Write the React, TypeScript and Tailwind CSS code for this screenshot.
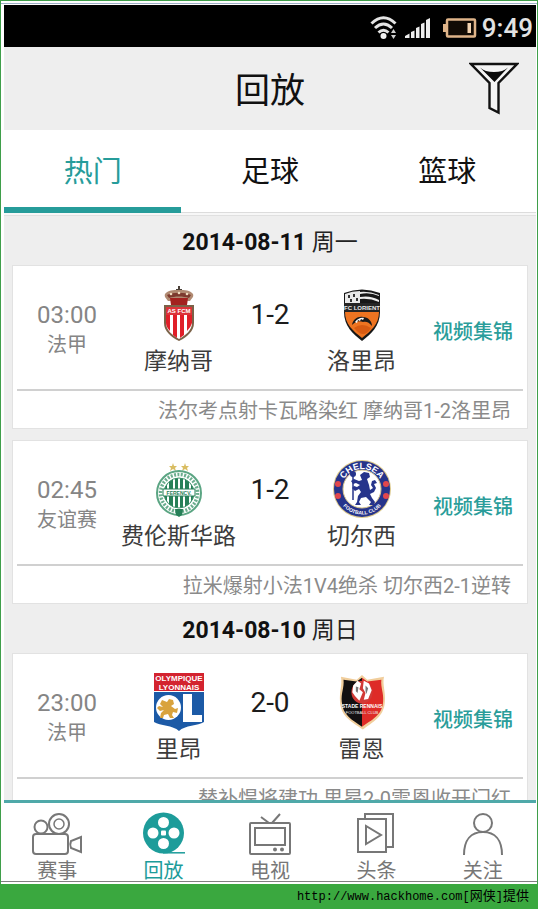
import type { ReactNode } from "react";

/* ---------- club crests ---------- */

function MonacoCrest() {
  return (
    <svg viewBox="0 0 60 60" className="size-[60px]" role="img" aria-label="摩纳哥">
      <path d="M29 2h2v3h2v1h-2v5h-2V6h-2V5h2z" fill="#4a4038" />
      <path d="M16 10c3-4 8-4 14-4s11 0 14 4c1 3-1 4-3 7H19c-2-3-4-4-3-7z" fill="#b08a72" />
      <path d="M18 11c6-3 18-3 24 0l-2 3c-6-2-14-2-20 0z" fill="#7d3a2e" />
      <path d="M21 14h18l-1 7H22z" fill="#a3221f" />
      <circle cx="22" cy="10" r="1.3" fill="#f0dcc0" />
      <circle cx="30" cy="9" r="1.3" fill="#f0dcc0" />
      <circle cx="38" cy="10" r="1.3" fill="#f0dcc0" />
      <path d="M15 21h30v18c0 8-7 14-15 18-8-4-15-10-15-18z" fill="#7b6248" />
      <path d="M17 23h26v16c0 7-6 12-13 16-7-4-13-9-13-16z" fill="#fff" />
      <path d="M17 31h4v16q-4-4-4-8zM24 31h4v23l-4-3zM31 31h4v20l-4 3zM38 31h5v8q-1 4-5 8z" fill="#e01f28" />
      <path d="M17 23h26v8H17z" fill="#dc343a" />
      <text x="30" y="29" textAnchor="middle" fontSize="6" fontWeight="700" fill="#fff" fontFamily="Liberation Sans, sans-serif">AS FCM</text>
    </svg>
  );
}

function LorientCrest() {
  return (
    <svg viewBox="0 0 60 60" className="size-[60px]" role="img" aria-label="洛里昂">
      <path d="M12 9q18-7 36 0v19c0 14-9 22-18 29C21 50 12 42 12 28z" fill="#171717" />
      <path d="M13 10q7-3 15-3v12H13z" fill="#e9e9e9" />
      <path d="M28 8q9-1 19 3v1q-9-4-19-2zM28 13q10-2 19 3v2q-9-4-19-3z" fill="#eee" />
      <path d="M16 11h2v3h-2zM21 10h2v3h-2zM18 15h2v3h-2zM24 14h2v3h-2z" fill="#333" />
      <path d="M12 19h36v9H12z" fill="#252525" />
      <text x="30" y="26" textAnchor="middle" fontSize="6" fontWeight="700" fill="#e8e8e8" fontFamily="Liberation Sans, sans-serif">FC LORIENT</text>
      <path d="M13 28h34c0 12-8 19-17 26-9-7-17-14-17-26z" fill="#ee7421" />
      <path d="M20 41c1-6 6-9 11-8 5 0 9 4 9 9-3-4-6-5-9-4-4-2-8 0-11 3z" fill="#1a1a1a" />
      <path d="M23 38c2-3 6-5 9-4l-1 2-2-1-1 2-2-1-1 3z" fill="#fff" />
      <path d="M22 44q8-6 17 0-4 6-8 6t-9-6z" fill="#d85b12" />
    </svg>
  );
}

function FerencvarosCrest() {
  return (
    <svg viewBox="0 0 60 60" className="size-[60px]" role="img" aria-label="费伦斯华路">
      <defs>
        <clipPath id="fer-disc"><circle cx="30" cy="34" r="15" /></clipPath>
      </defs>
      <path d="M24 4l1 3h3l-2 2 1 3-3-2-3 2 1-3-2-2h3zM36 4l1 3h3l-2 2 1 3-3-2-3 2 1-3-2-2h3z" fill="#d9bd62" />
      <circle cx="30" cy="34" r="22" fill="#fff" stroke="#5ba583" strokeWidth="2" />
      <circle cx="30" cy="34" r="18.500" fill="none" stroke="#6cae8f" strokeWidth="3.500" strokeDasharray="2 1.400" />
      <g clipPath="url(#fer-disc)">
        <path d="M14 18h4v32h-4zM20 18h4v32h-4zM26 18h3v32h-3zM31 18h3v32h-3zM36 18h4v32h-4zM42 18h4v32h-4z" fill="#278058" />
      </g>
      <circle cx="30" cy="34" r="15" fill="none" stroke="#3a9069" />
      <path d="M14 30h32v7H14z" fill="#fff" stroke="#278058" />
      <text x="30" y="35.500" textAnchor="middle" fontSize="5" fontWeight="700" fill="#278058" fontFamily="Liberation Sans, sans-serif">FERENCV.</text>
      <path d="M26 50h8l-1 6-3 2-3-2z" fill="#278058" />
    </svg>
  );
}

function ChelseaCrest() {
  return (
    <svg viewBox="0 0 60 60" className="size-[60px]" role="img" aria-label="切尔西">
      <defs>
        <path id="che-top" d="M9 31a21 21 0 0 1 42 0" />
        <path id="che-bottom" d="M4.500 30a25.500 25.500 0 0 0 51 0" />
      </defs>
      <circle cx="30" cy="30" r="29" fill="#dcc98c" />
      <circle cx="30" cy="30" r="28" fill="#26348b" />
      <circle cx="30" cy="30" r="19" fill="#fff" stroke="#dcc98c" />
      <text fontSize="9" fontWeight="700" fill="#fff" fontFamily="Liberation Sans, sans-serif">
        <textPath href="#che-top" startOffset="50%" textAnchor="middle">CHELSEA</textPath>
      </text>
      <text fontSize="5" fontWeight="700" fill="#fff" fontFamily="Liberation Sans, sans-serif">
        <textPath href="#che-bottom" startOffset="50%" textAnchor="middle">FOOTBALL CLUB</textPath>
      </text>
      <g fill="#e2474c">
        <circle cx="6" cy="25" r="3" /><circle cx="6" cy="37" r="3" />
        <circle cx="54" cy="25" r="3" /><circle cx="54" cy="37" r="3" />
      </g>
      <path d="M28 16l4-3 5 1 1 4-3 2 2 6 1 5 3-2-2-3 1-4 3-1 2 3-3 1 2 4-2 4-4 2 2 4 3 4-1 3h-5l2-3-5-5-5 1-2 4 2 3h-6l2-3 1-6 3-4-2-3-4 2-3-3 2-2 3 1 3-2-4-2-3 1-2-3 3-2 5 2 3-1z" fill="#26348b" />
      <path d="M21 16v25" stroke="#26348b" strokeWidth="1.500" />
      <circle cx="21" cy="15" r="3" fill="#26348b" />
    </svg>
  );
}

function LyonCrest() {
  return (
    <svg viewBox="0 0 60 60" className="size-[60px]" role="img" aria-label="里昂">
      <path d="M5 1h50v18H5z" fill="#d3232f" />
      <text x="30" y="9" textAnchor="middle" fontSize="8" fontWeight="700" fill="#fff" fontFamily="Liberation Sans, sans-serif">OLYMPIQUE</text>
      <text x="30" y="17.500" textAnchor="middle" fontSize="8" fontWeight="700" fill="#fff" fontFamily="Liberation Sans, sans-serif">LYONNAIS</text>
      <path d="M5 20h50v30c-6 4-19 3-25 9-6-6-19-5-25-9z" fill="#1c5aa6" />
      <circle cx="19.500" cy="35.500" r="12.500" fill="#fff" />
      <path d="M34 22h9v21h10v7H34z" fill="#fff" />
      <path d="M13 28l5 2 2-3 4 1 1 4-3 2 4 3 3-1-1 5-4-1-1 3 2 3h-4l-2-4-4 1-1 3h-3l1-5 3-3-4 1-3-3 2-2 4 1-3-3z" fill="#d9a33d" />
    </svg>
  );
}

function RennesCrest() {
  return (
    <svg viewBox="0 0 60 60" className="size-[60px]" role="img" aria-label="雷恩">
      <g transform="translate(3.600 0) scale(.88 .96)">
        <path d="M30 3l6 5 19-3c-2 8 2 15 1 26-1 16-14 21-25 29C19 52 6 47 5 31 4 20 8 13 6 5l18 3z" fill="#f1ce9c" />
        <path d="M30 6l-6 4L9 8c1 8-3 14-2 23 1 14 12 19 23 26z" fill="#121011" />
        <path d="M30 6l6 4 16-2c-1 8 3 14 2 23-1 14-13 19-24 26z" fill="#de2b27" />
        <circle cx="30" cy="21" r="12" fill="#d23a36" />
        <path d="M20 14l5-5 4 3-2 6 4 3-4 9-5-5-3-4zM32 9l6 3 3 7-4 9-5 1 2-7-3-5z" fill="#fff" />
        <path d="M23 15l3 1-1 6-2-2zM34 14l3 3-2 6-1-3z" fill="#777" />
      </g>
      <text x="30" y="36" textAnchor="middle" fontSize="5" fontWeight="700" fill="#fff" fontFamily="Liberation Sans, sans-serif">STADE RENNAIS</text>
      <text x="30" y="42" textAnchor="middle" fontSize="4" fill="#eee" fontFamily="Liberation Sans, sans-serif">FOOTBALL CLUB</text>
    </svg>
  );
}

/* ---------- status bar and header icons ---------- */

function WifiIcon() {
  return (
    <svg viewBox="0 0 28 26" className="h-[26px] w-[28px]" aria-hidden="true">
      <g fill="none" stroke="#e4e4e4" strokeWidth="3">
        <path d="M1.500 8.500q12-11.500 24 0" />
        <path d="M5 13q8.500-8 17 0" />
        <path d="M8.500 17.500q5-4.500 10 0" />
      </g>
      <circle cx="13.500" cy="21" r="3" fill="#f2f2f2" />
      <path d="M23.500 14l2.500 4h-5zM23.500 24l2.500-4h-5z" fill="#d0d0d0" />
    </svg>
  );
}

function SignalIcon() {
  return (
    <svg viewBox="0 0 26 22" className="h-[22px] w-[26px]" aria-hidden="true">
      <path d="M0 19l4.500-2.500V21H0zM6 15l3.500-1.500V21H6zM11 11l3.500-1.500V21H11zM16 7l3.500-1.500V21H16zM21 3l4-2v20h-4z" fill="#ececec" />
    </svg>
  );
}

function BatteryIcon() {
  return (
    <svg viewBox="0 0 34 20" className="h-[20px] w-[34px]" aria-hidden="true">
      <rect x="4" y="1.500" width="28" height="17" rx="1" fill="#120b05" stroke="#dfb489" strokeWidth="2.500" />
      <path d="M0 6h3v8H0z" fill="#dfb489" />
      <path d="M24.500 5h3.500v10h-3.500z" fill="#f3d3b0" />
    </svg>
  );
}

function FilterIcon() {
  return (
    <svg viewBox="0 0 50 53" className="h-[53px] w-[50px]" aria-hidden="true">
      <path d="M2 2h46L29.500 21v29.500l-9-4.500V21z" fill="#f4f4f4" stroke="#111" strokeWidth="2.400" />
      <path d="M11 5.500q5 4.500 14 4.500t14-4.500L25.500 20z" fill="#0a0a0a" />
    </svg>
  );
}

/* ---------- bottom navigation icons ---------- */

function CameraIcon() {
  return (
    <svg viewBox="0 0 50 44" className="h-[44px] w-[50px]" fill="none" stroke="currentColor" strokeWidth="2" aria-hidden="true">
      <circle cx="9" cy="15" r="6.500" />
      <circle cx="27" cy="12" r="10" />
      <circle cx="27" cy="12" r="5" strokeWidth="1.500" />
      <rect x="1" y="22" width="35" height="20" rx="3" fill="#fff" />
      <path d="M49 25v15l-10-4q-1.500-3.500 0-7z" />
    </svg>
  );
}

function ReelIcon() {
  return (
    <svg viewBox="0 0 42 44" className="h-[44px] w-[42px]" aria-hidden="true">
      <circle cx="20.500" cy="21" r="20.500" fill="currentColor" />
      <path d="M20 40.800h22" stroke="currentColor" strokeWidth="1.500" />
      <g fill="#fff">
        <circle cx="20.500" cy="10.500" r="5.500" />
        <circle cx="20.500" cy="31.500" r="5.500" />
        <circle cx="10" cy="21" r="5.500" />
        <circle cx="31" cy="21" r="5.500" />
        <rect x="18" y="18.500" width="5" height="5" rx="1" />
      </g>
    </svg>
  );
}

function TvIcon() {
  return (
    <svg viewBox="0 0 42 44" className="h-[44px] w-[42px]" fill="none" stroke="currentColor" strokeWidth="2" aria-hidden="true">
      <path d="M12 5l8 6M31 2l-8 9" />
      <rect x="1" y="11" width="40" height="31" rx="1" />
      <rect x="6" y="16" width="30" height="17" />
      <g fill="currentColor" stroke="none">
        <circle cx="26" cy="37.500" r="2" />
        <circle cx="33" cy="37.500" r="2" />
      </g>
    </svg>
  );
}

function HeadlinesIcon() {
  return (
    <svg viewBox="0 0 38 44" className="h-[44px] w-[38px]" fill="none" stroke="currentColor" strokeWidth="2" aria-hidden="true">
      <path d="M8 7V2h28v33h-6" />
      <rect x="1" y="7" width="28" height="33" />
      <path d="M9 14v18l15-9z" />
    </svg>
  );
}

function PersonIcon() {
  return (
    <svg viewBox="0 0 40 44" className="h-[44px] w-[40px]" fill="none" stroke="currentColor" strokeWidth="2" aria-hidden="true">
      <circle cx="20" cy="11" r="9" />
      <path d="M1 43C1 28 8 20 20 20s19 8 19 23" />
    </svg>
  );
}

/* ---------- data ---------- */

type Match = {
  time: string;
  league: string;
  home: string;
  homeCrest: ReactNode;
  score: string;
  away: string;
  awayCrest: ReactNode;
  summary: string;
};

type Day = { date: string; weekday: string; matches: Match[] };

const days: Day[] = [
  {
    date: "2014-08-11",
    weekday: "周一",
    matches: [
      { time: "03:00", league: "法甲", home: "摩纳哥", homeCrest: <MonacoCrest />, score: "1-2", away: "洛里昂", awayCrest: <LorientCrest />, summary: "法尔考点射卡瓦略染红 摩纳哥1-2洛里昂" },
      { time: "02:45", league: "友谊赛", home: "费伦斯华路", homeCrest: <FerencvarosCrest />, score: "1-2", away: "切尔西", awayCrest: <ChelseaCrest />, summary: "拉米爆射小法1V4绝杀 切尔西2-1逆转" },
    ],
  },
  {
    date: "2014-08-10",
    weekday: "周日",
    matches: [
      { time: "23:00", league: "法甲", home: "里昂", homeCrest: <LyonCrest />, score: "2-0", away: "雷恩", awayCrest: <RennesCrest />, summary: "替补悍将建功 里昂2-0雷恩收开门红" },
    ],
  },
];

const tabs = ["热门", "足球", "篮球"];

const navItems = [
  { label: "赛事", icon: <CameraIcon /> },
  { label: "回放", icon: <ReelIcon /> },
  { label: "电视", icon: <TvIcon /> },
  { label: "头条", icon: <HeadlinesIcon /> },
  { label: "关注", icon: <PersonIcon /> },
];

/* ---------- pieces ---------- */

function Team({ name, crest }: { name: string; crest: ReactNode }) {
  return (
    <div className="flex flex-col items-center pt-[18px]">
      {crest}
      <span className="text-[23px] leading-9 whitespace-nowrap text-[#3c3c3c]">{name}</span>
    </div>
  );
}

function MatchCard({ match }: { match: Match }) {
  return (
    <article className="border border-[#e2e2e2] bg-white">
      <div className="mx-1 border-b-2 border-[#d0d0d0]">
        <div className="grid h-[123px] grid-cols-[100fr_123fr_60fr_123fr_100fr]">
          <div className="flex flex-col items-center pt-[34px] text-[#858585]">
            <time className="text-2xl leading-[30px]">{match.time}</time>
            <span className="text-xl leading-[30px]">{match.league}</span>
          </div>
          <Team name={match.home} crest={match.homeCrest} />
          <div className="pt-[34px] text-center text-[28px] leading-[30px] whitespace-nowrap text-[#1c1c1c]">{match.score}</div>
          <Team name={match.away} crest={match.awayCrest} />
          <div className="flex justify-center pt-[51px]">
            <a href="#video" className="h-[30px] text-xl leading-[30px] font-medium whitespace-nowrap text-[#2a9d9a]">视频集锦</a>
          </div>
        </div>
      </div>
      <p className="pt-[3px] pr-4 text-right text-xl leading-[34px] whitespace-nowrap text-[#8a8a8a]">{match.summary}</p>
    </article>
  );
}

export default function App() {
  return (
    <div className="flex h-screen flex-col bg-white font-[Roboto,'Noto_Sans_CJK_SC',sans-serif]">
      <div className="flex min-h-0 flex-1 flex-col border-x border-t border-[#3f9e4a] py-[2px]">
        <div className="flex min-h-0 flex-1 flex-col border-t border-b border-t-[#9db0c6] border-b-[#808080] pt-px">
          <div className="flex min-h-0 flex-1 flex-col pr-px pl-[3px]">
            <div className="flex h-[42px] shrink-0 items-center justify-end bg-black pt-[4px] pr-[3px]">
              <WifiIcon />
              <span className="ml-[7px] flex"><SignalIcon /></span>
              <span className="mr-[5px] ml-[12px] flex"><BatteryIcon /></span>
              <time className="text-[26px] leading-[30px] font-medium text-[#e2e2e2]">9:49</time>
            </div>

            <header className="grid h-[83px] shrink-0 grid-cols-[1fr_auto_1fr] items-center bg-[#eeeeee]">
              <h1 className="col-start-2 pt-[6px] text-[35px] leading-[44px] text-[#111]">回放</h1>
              <button type="button" aria-label="筛选" className="mr-[17px] justify-self-end">
                <FilterIcon />
              </button>
            </header>

            <div role="tablist" className="grid h-[83px] shrink-0 grid-cols-3">
              {tabs.map((tab, i) => (
                <button
                  key={tab}
                  type="button"
                  role="tab"
                  aria-selected={i === 0}
                  className={
                    i === 0
                      ? "border-b-[6px] border-[#269c9a] pt-[6px] text-[29px] leading-9 text-[#269c9a]"
                      : "border-b border-[#dcdcdc] pt-px text-[29px] leading-9 text-[#111]"
                  }
                >
                  {tab}
                </button>
              ))}
            </div>

            <main className="min-h-0 flex-1 overflow-hidden bg-[#eeeeee]">
              <div className="h-[3px] border-b border-[#e0e0e0] bg-[#f7f7f7]" />
              {days.map((day) => (
                <section key={day.date} className="px-2">
                  <h2 className="pt-[9px] pb-[4px] text-center text-[23px] leading-9 text-[#111]">
                    <span className="font-bold">{day.date}</span> <span className="font-normal text-[#222]">{day.weekday}</span>
                  </h2>
                  <div className="flex flex-col gap-[11px]">
                    {day.matches.map((match) => (
                      <MatchCard key={match.home} match={match} />
                    ))}
                  </div>
                </section>
              ))}
            </main>

            <nav className="grid h-[81px] shrink-0 grid-cols-5 border-t-[3px] border-[#4fa9a9] bg-white">
              {navItems.map((item, i) => (
                <button
                  key={item.label}
                  type="button"
                  className={
                    i === 1
                      ? "flex flex-col items-center pt-[9px] text-[#1d9c9a]"
                      : "flex flex-col items-center pt-[9px] text-[#777]"
                  }
                >
                  {item.icon}
                  <span className="text-xl leading-[30px]">{item.label}</span>
                </button>
              ))}
            </nav>
          </div>
        </div>
      </div>

      <footer className="flex h-[25px] shrink-0 items-center justify-end bg-[#3aa83f] pr-[9px] font-['Liberation_Mono','Noto_Sans_CJK_SC',monospace] text-xs leading-5 text-black">
        <a href="#hackhome">http://www.hackhome.com</a>
        <span>[<span className="text-[13px]">网侠</span>]<span className="text-[13px]">提供</span></span>
      </footer>
    </div>
  );
}
